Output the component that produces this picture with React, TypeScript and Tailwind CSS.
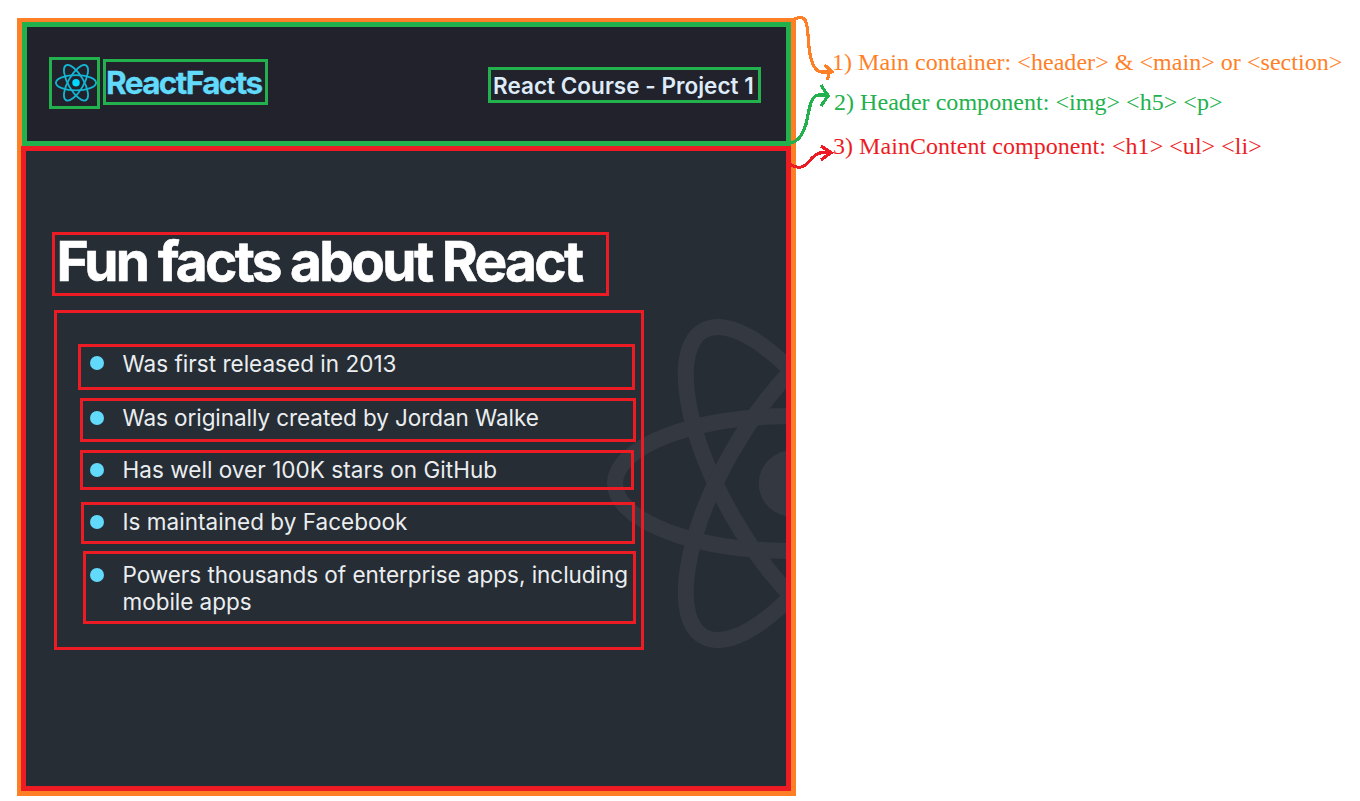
import React from "react";

function Atom({ className, color, core, stroke }: { className: string; color: string; core: string; stroke: number }) {
  return (
    <svg className={className} viewBox="-11.5 -10.25 23 20.5" fill="none" aria-hidden="true">
      <circle r="2.05" fill={core} />
      <g stroke={color} strokeWidth={stroke}>
        <ellipse rx="11" ry="4.2" />
        <ellipse rx="11" ry="4.2" transform="rotate(60)" />
        <ellipse rx="11" ry="4.2" transform="rotate(120)" />
      </g>
    </svg>
  );
}

const facts = [
  { lines: ["Was first released in 2013"], box: "mt-[31px] ml-[21px] h-[46px] w-[557px] pl-[9px] pt-[3px]", dot: "mt-[6px]", text: "tracking-[0.02px]" },
  { lines: ["Was originally created by Jordan Walke"], box: "mt-2 ml-[23px] h-11 w-[556px] pl-[7px] pt-[2px]", dot: "mt-[8px]", text: "mt-px tracking-[-0.07px]" },
  { lines: ["Has well over 100K stars on GitHub"], box: "mt-2 ml-[23px] h-10 w-[554px] pl-[7px] pt-[3px]", dot: "mt-[7px]", text: "tracking-[0.04px]" },
  { lines: ["Is maintained by Facebook"], box: "mt-3 ml-6 h-[42px] w-[554px] pl-[6px] pt-[3px]", dot: "mt-[7px]", text: "tracking-[0.03px]" },
  { lines: ["Powers thousands of enterprise apps, including", "mobile apps"], box: "mt-[7px] ml-[26px] h-[73px] w-[553px] pl-[4px] pt-[7px]", dot: "mt-[7px]", text: "tracking-[-0.03px]" },
];

function Header() {
  return (
    <header className="ml-px flex h-[124px] w-[769px] items-start border-5 border-[#22b14c] bg-[#21222b] pl-[22px]">
      <div className="mt-[30px] flex h-[52px] w-[51px] shrink-0 items-center justify-center border-3 border-[#22b14c]">
        <Atom className="ml-[2px] h-[37.5px] w-[42px] shrink-0" color="#13b5d3" core="#00d8ff" stroke={1} />
      </div>
      <h5 className="mt-8 ml-[3px] h-[46px] w-[165px] shrink-0 border-3 border-[#22b14c] text-[31.5px] leading-[41px] font-bold tracking-[-1.6px] whitespace-nowrap text-[#61dafb] [-webkit-text-stroke:0.3px_#61dafb]">
        ReactFacts
      </h5>
      <p className="mt-10 ml-[220px] h-9 w-[273px] shrink-0 border-3 border-[#22b14c] pl-[2px] text-[22.5px] leading-[31px] font-semibold tracking-[0.03px] whitespace-nowrap text-[#deebf8]">
        React Course - Project 1
      </p>
    </header>
  );
}

function MainContent() {
  return (
    <main className="relative flex h-[645px] w-[770px] flex-col overflow-hidden border-5 border-[#ed1c24] bg-[#262d34] pl-[26px]">
      <Atom className="absolute top-[168px] left-[581px] h-[329px] w-[369px]" color="#343840" core="#343840" stroke={1} />
      <h1 className="relative mt-[81px] h-16 w-[557px] border-3 border-[#ed1c24] pl-[1.5px] text-[55px] leading-[52px] font-bold tracking-[-2.7px] whitespace-nowrap text-white [-webkit-text-stroke:0.6px_#ffffff]">
        Fun facts about React
      </h1>
      <ul className="relative mt-[14px] ml-[2px] flex h-[340px] w-[590px] flex-col border-3 border-[#ed1c24]">
        {facts.map((fact) => (
          <li key={fact.lines[0]} className={`flex shrink-0 items-start border-3 border-[#ed1c24] ${fact.box}`}>
            <span className={`size-[14px] shrink-0 rounded-full bg-[#61dafb] ${fact.dot}`} />
            <span className={`ml-[18.5px] text-[22.5px] leading-[27px] whitespace-nowrap text-[#ebedf0] ${fact.text}`}>
              {fact.lines.map((line) => (
                <span key={line} className="block">{line}</span>
              ))}
            </span>
          </li>
        ))}
      </ul>
    </main>
  );
}

function Notes() {
  return (
    <div className="mt-11 ml-9 flex flex-col font-['Liberation_Serif',serif] text-[24px] leading-[36px] tracking-[0.04px] whitespace-nowrap">
      <p className="text-[#ff7f27]">{"1) Main container: <header> & <main> or <section>"}</p>
      <p className="mt-1 ml-[2px] text-[#22b14c]">{"2) Header component: <img> <h5> <p>"}</p>
      <p className="mt-2 ml-px text-[#ed1c24]">{"3) MainContent component: <h1> <ul> <li>"}</p>
    </div>
  );
}

function Arrows() {
  return (
    <svg className="absolute top-0 left-[780px] h-[200px] w-[60px]" viewBox="780 0 60 200" fill="none" strokeWidth="3.2" shapeRendering="crispEdges" aria-hidden="true">
      <g stroke="#ff7f27">
        <path d="M795 19C801 16 805 17 806.500 24C809 35 808 45 810 54C812 64 815 72 822 72H832" />
        <path d="M824.500 65L832 71.500L829 73L827.500 80" />
      </g>
      <g stroke="#22b14c">
        <path d="M790 143C798 142 803 134 806 124C809 112 810 95 819 95H829" />
        <path d="M821 85L828 96L821 106" />
      </g>
      <g stroke="#ed1c24">
        <path d="M790 164C795 168 801 168 805 165.500C811 160 815 152.500 823 152.500H832" />
        <path d="M821 146L831 152.700L821 160" />
      </g>
    </svg>
  );
}

export default function App() {
  return (
    <div className="relative flex h-[801px] w-[1360px] items-start overflow-hidden bg-white pt-[18px] pl-[17px] font-[Inter,sans-serif]">
      <section className="flex h-[778px] w-[779px] shrink-0 flex-col bg-[#ff7f27] pt-1 pl-1">
        <Header />
        <MainContent />
      </section>
      <div className="-mt-[18px]">
        <Notes />
      </div>
      <Arrows />
    </div>
  );
}
